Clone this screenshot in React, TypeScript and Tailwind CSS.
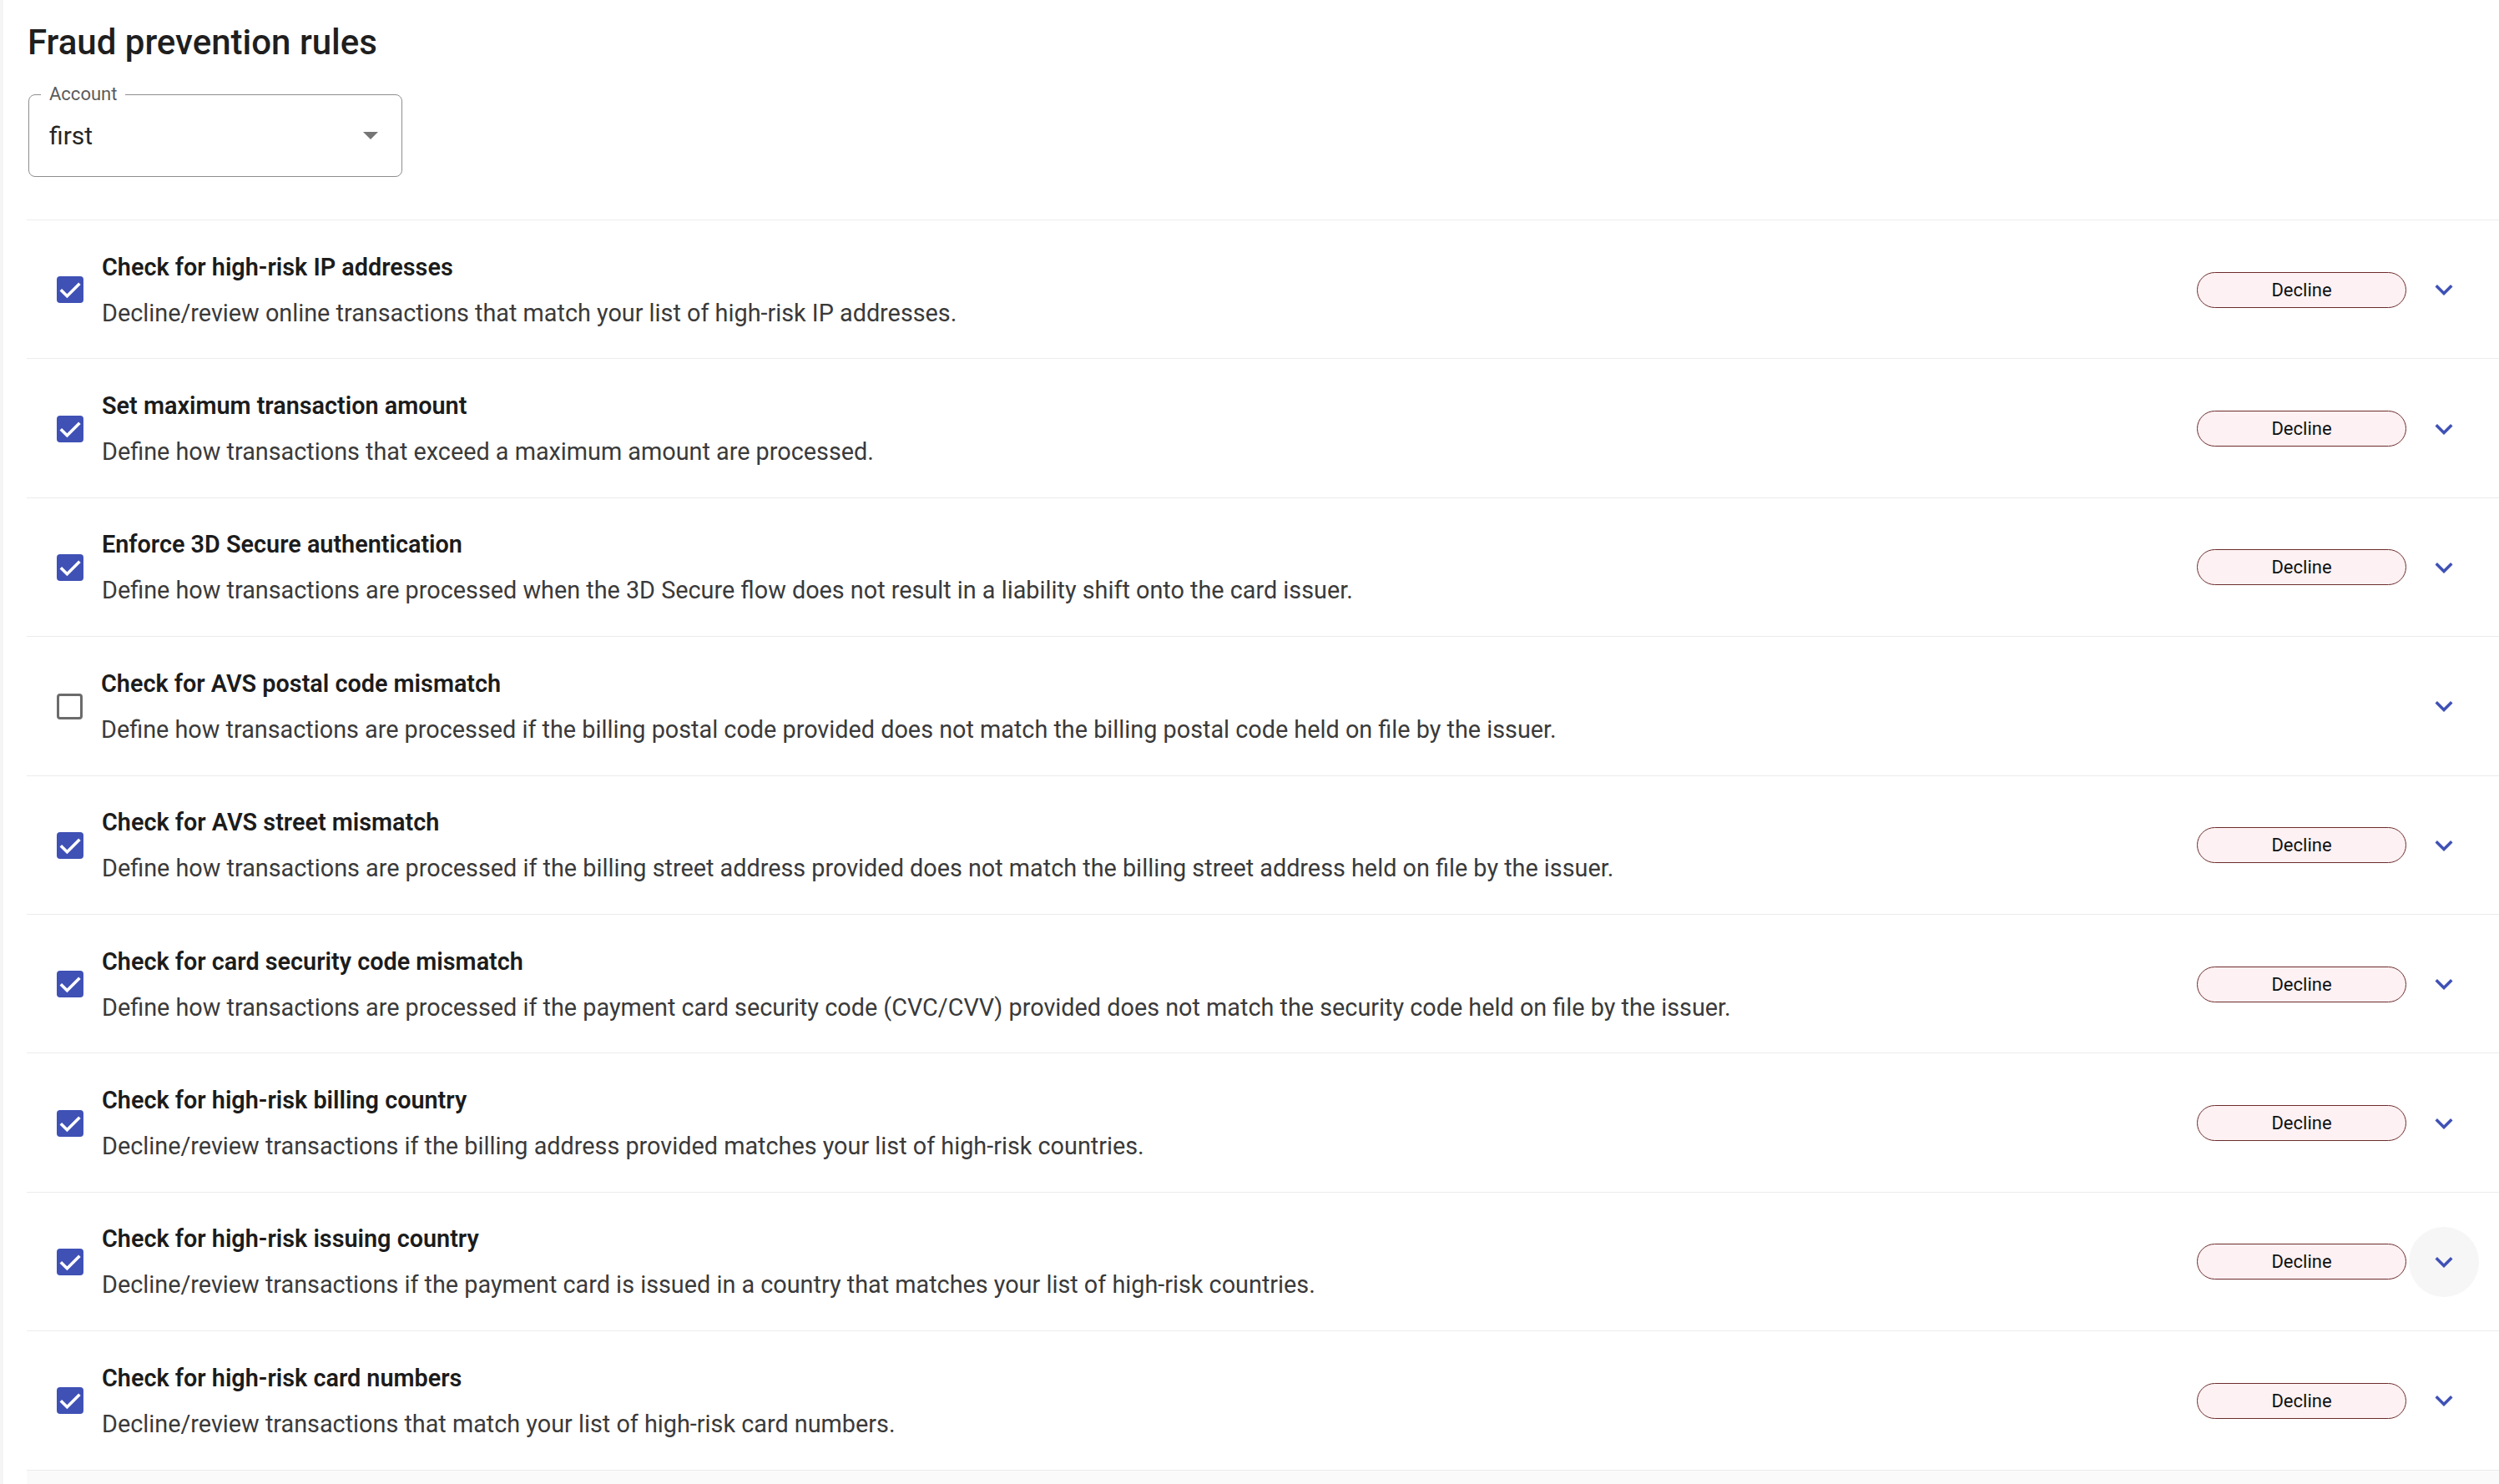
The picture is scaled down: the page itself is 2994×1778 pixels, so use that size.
const rules = [
  {
    title: "Check for high-risk IP addresses",
    desc: "Decline/review online transactions that match your list of high-risk IP addresses.",
    on: true,
  },
  {
    title: "Set maximum transaction amount",
    desc: "Define how transactions that exceed a maximum amount are processed.",
    on: true,
  },
  {
    title: "Enforce 3D Secure authentication",
    desc: "Define how transactions are processed when the 3D Secure flow does not result in a liability shift onto the card issuer.",
    on: true,
  },
  {
    title: "Check for AVS postal code mismatch",
    desc: "Define how transactions are processed if the billing postal code provided does not match the billing postal code held on file by the issuer.",
    on: false,
  },
  {
    title: "Check for AVS street mismatch",
    desc: "Define how transactions are processed if the billing street address provided does not match the billing street address held on file by the issuer.",
    on: true,
  },
  {
    title: "Check for card security code mismatch",
    desc: "Define how transactions are processed if the payment card security code (CVC/CVV) provided does not match the security code held on file by the issuer.",
    on: true,
  },
  {
    title: "Check for high-risk billing country",
    desc: "Decline/review transactions if the billing address provided matches your list of high-risk countries.",
    on: true,
  },
  {
    title: "Check for high-risk issuing country",
    desc: "Decline/review transactions if the payment card is issued in a country that matches your list of high-risk countries.",
    on: true,
    hover: true,
  },
  {
    title: "Check for high-risk card numbers",
    desc: "Decline/review transactions that match your list of high-risk card numbers.",
    on: true,
  },
];

function Checkbox({ checked }: { checked: boolean }) {
  if (!checked) {
    return (
      <span className="w-[31px] h-[31px] shrink-0 rounded-[4px] border-[3.5px] border-[#6b6b6b] bg-white" />
    );
  }
  return (
    <span className="w-[32px] h-[32px] shrink-0 rounded-[4px] bg-[#3f51b5] flex items-center justify-center">
      <svg width="32" height="32" viewBox="0 0 32 32" fill="none">
        <polyline
          points="4.8,16.2 12.4,23.8 27.4,8.8"
          stroke="white"
          strokeWidth="3.6"
        />
      </svg>
    </span>
  );
}

function ExpandIcon() {
  return (
    <svg width="42" height="42" viewBox="0 0 24 24" fill="#3f51b5">
      <path d="M16.59 8.59 12 13.17 7.41 8.59 6 10l6 6 6-6z" />
    </svg>
  );
}

export default function App() {
  return (
    <div className="min-h-screen bg-white flex font-[Roboto,sans-serif]">
      {/* sidebar edge */}
      <div className="w-[4px] shrink-0 bg-[#f5f5f5]" />

      <main className="flex-1 flex flex-col">
        <div className="pl-[29px] pt-[29px]">
          <h1 className="text-[42px] leading-[44px] font-medium text-[#1f1f1f]">
            Fraud prevention rules
          </h1>

          {/* Account select */}
          <div className="relative mt-[40px] ml-[1px] w-[448px] h-[99px] rounded-[8px] border border-[#8e8e8e] pl-[24px] pr-[28px] flex items-center justify-between">
            <span className="absolute left-[14px] -top-[14px] px-[10px] bg-white text-[22px] leading-[26px] text-[#5b5b5b]">
              Account
            </span>
            <span className="text-[30px] text-[#262626]">first</span>
            <svg width="18" height="9" viewBox="0 0 18 9">
              <path d="M0 0h18L9 9z" fill="#757575" />
            </svg>
          </div>
        </div>

        <ul className="ml-[28px] mt-[51px] border-t border-[#ececec]">
          {rules.map((r) => (
            <li
              key={r.title}
              className="h-[166.4px] border-b border-[#ececec] flex items-center pl-[36px] pr-[24px] pt-[1px]"
            >
              <Checkbox checked={r.on} />
              <div className="flex-1 ml-[22px] flex flex-col">
                <span className="text-[28.8px] leading-[40px] font-semibold text-[#1c1c1c]">
                  {r.title}
                </span>
                <span className="mt-[15px] text-[28.8px] leading-[40px] text-[#3a3a3a]">
                  {r.desc}
                </span>
              </div>
              {r.on && (
                <span className="w-[251px] h-[43px] rounded-full border border-[#6d2c2c] bg-[#fdf1f3] flex items-center justify-center text-[22px] text-[#111]">
                  Decline
                </span>
              )}
              <button
                className={
                  "ml-[3px] w-[84px] h-[84px] rounded-full flex items-center justify-center " +
                  (r.hover ? "bg-[#f6f6f6]" : "")
                }
              >
                <ExpandIcon />
              </button>
            </li>
          ))}
        </ul>
        <div className="ml-[28px] flex-1 bg-[#fafafa]" />
      </main>
    </div>
  );
}
